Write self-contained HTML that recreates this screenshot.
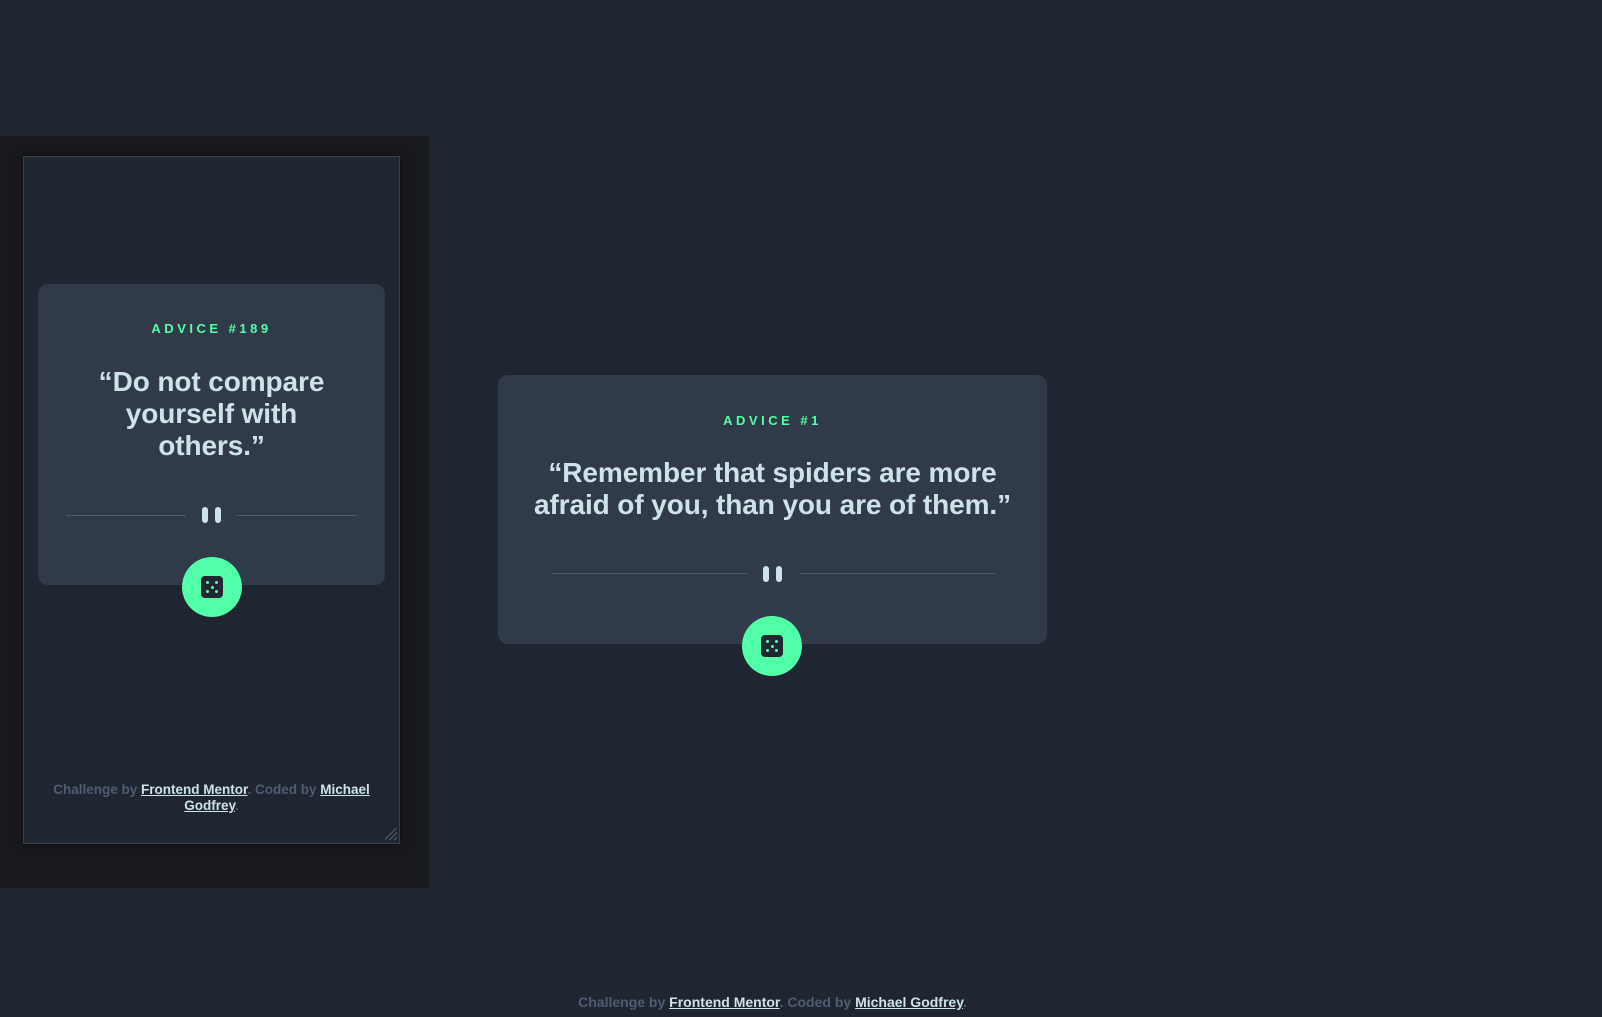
<!DOCTYPE html>
<html><head><meta charset="utf-8"><style>
*{margin:0;padding:0;box-sizing:border-box}
body{width:1602px;height:1017px;background:#1f2632;font-family:"Liberation Sans",sans-serif;position:relative;overflow:hidden}
.abs{position:absolute}
.panel{left:0;top:136px;width:429px;height:752px;background:#18191c}
.frame{left:23px;top:156px;width:377px;height:688px;background:#1f2632;border:1px solid #3a3f48;box-shadow:0 0 6px rgba(0,0,0,.5)}
.card{background:#313a48;border-radius:10px}
.lbl{color:#52ffa8;font-size:13px;font-weight:bold;letter-spacing:3.5px;text-align:center;width:100%}
.q{color:#cee3e9;font-size:28px;font-weight:bold;text-align:center;line-height:32px;letter-spacing:-0.1px}
.line{height:1px;background:#4f5b6d}
.bar{width:6px;height:16px;background:#cee3e9;border-radius:3px}
.btn{width:60px;height:60px;border-radius:50%;background:#52ffa8}
.die{left:19px;top:19px;width:22px;height:22px;background:#202733;border-radius:4px}
.dot{width:3px;height:3px;background:#52ffa8;border-radius:50%}
.foot{color:#4e5d73;font-size:14px;font-weight:bold;text-align:center}
.foot u{color:#cee3e9}
</style></head><body>
<div class="abs panel"></div>
<div class="abs frame"></div>
<div class="abs card" style="left:38px;top:284px;width:347px;height:301px"></div>
<div class="abs lbl" style="left:38px;width:347px;top:321px">ADVICE #189</div>
<div class="abs q" style="left:86px;width:251px;top:366px">“Do not compare yourself with others.”</div>
<div class="abs line" style="left:66px;top:515px;width:120px"></div>
<div class="abs line" style="left:237px;top:515px;width:120px"></div>
<div class="abs bar" style="left:202px;top:507px"></div>
<div class="abs bar" style="left:215px;top:507px"></div>
<div class="abs btn" style="left:182px;top:557px"><div class="abs die"><div class="abs dot" style="left:5px;top:5px"></div><div class="abs dot" style="left:14px;top:5px"></div><div class="abs dot" style="left:9.5px;top:9.5px"></div><div class="abs dot" style="left:5px;top:14px"></div><div class="abs dot" style="left:14px;top:14px"></div></div></div>
<div class="abs foot" style="left:40px;width:343px;top:782px;line-height:16px;font-size:13.5px">Challenge by <u>Frontend Mentor</u>. Coded by <u>Michael Godfrey</u>.</div>
<div class="abs" style="left:385px;top:828px;width:12px;height:12px;background:linear-gradient(135deg,transparent 45%,#888 47%,transparent 52%,transparent 65%,#888 67%,transparent 72%,transparent 85%,#888 87%,transparent 92%)"></div>

<div class="abs card" style="left:498px;top:375px;width:549px;height:269px"></div>
<div class="abs lbl" style="left:498px;width:549px;top:413px">ADVICE #1</div>
<div class="abs q" style="left:520px;width:505px;top:457px">“Remember that spiders are more afraid of you, than you are of them.”</div>
<div class="abs line" style="left:551px;top:573px;width:196px"></div>
<div class="abs line" style="left:799px;top:573px;width:196px"></div>
<div class="abs bar" style="left:763px;top:566px"></div>
<div class="abs bar" style="left:776px;top:566px"></div>
<div class="abs btn" style="left:742px;top:616px"><div class="abs die"><div class="abs dot" style="left:5px;top:5px"></div><div class="abs dot" style="left:14px;top:5px"></div><div class="abs dot" style="left:9.5px;top:9.5px"></div><div class="abs dot" style="left:5px;top:14px"></div><div class="abs dot" style="left:14px;top:14px"></div></div></div>
<div class="abs foot" style="left:0;width:1545px;top:994px">Challenge by <u>Frontend Mentor</u>. Coded by <u>Michael Godfrey</u>.</div>
</body></html>
